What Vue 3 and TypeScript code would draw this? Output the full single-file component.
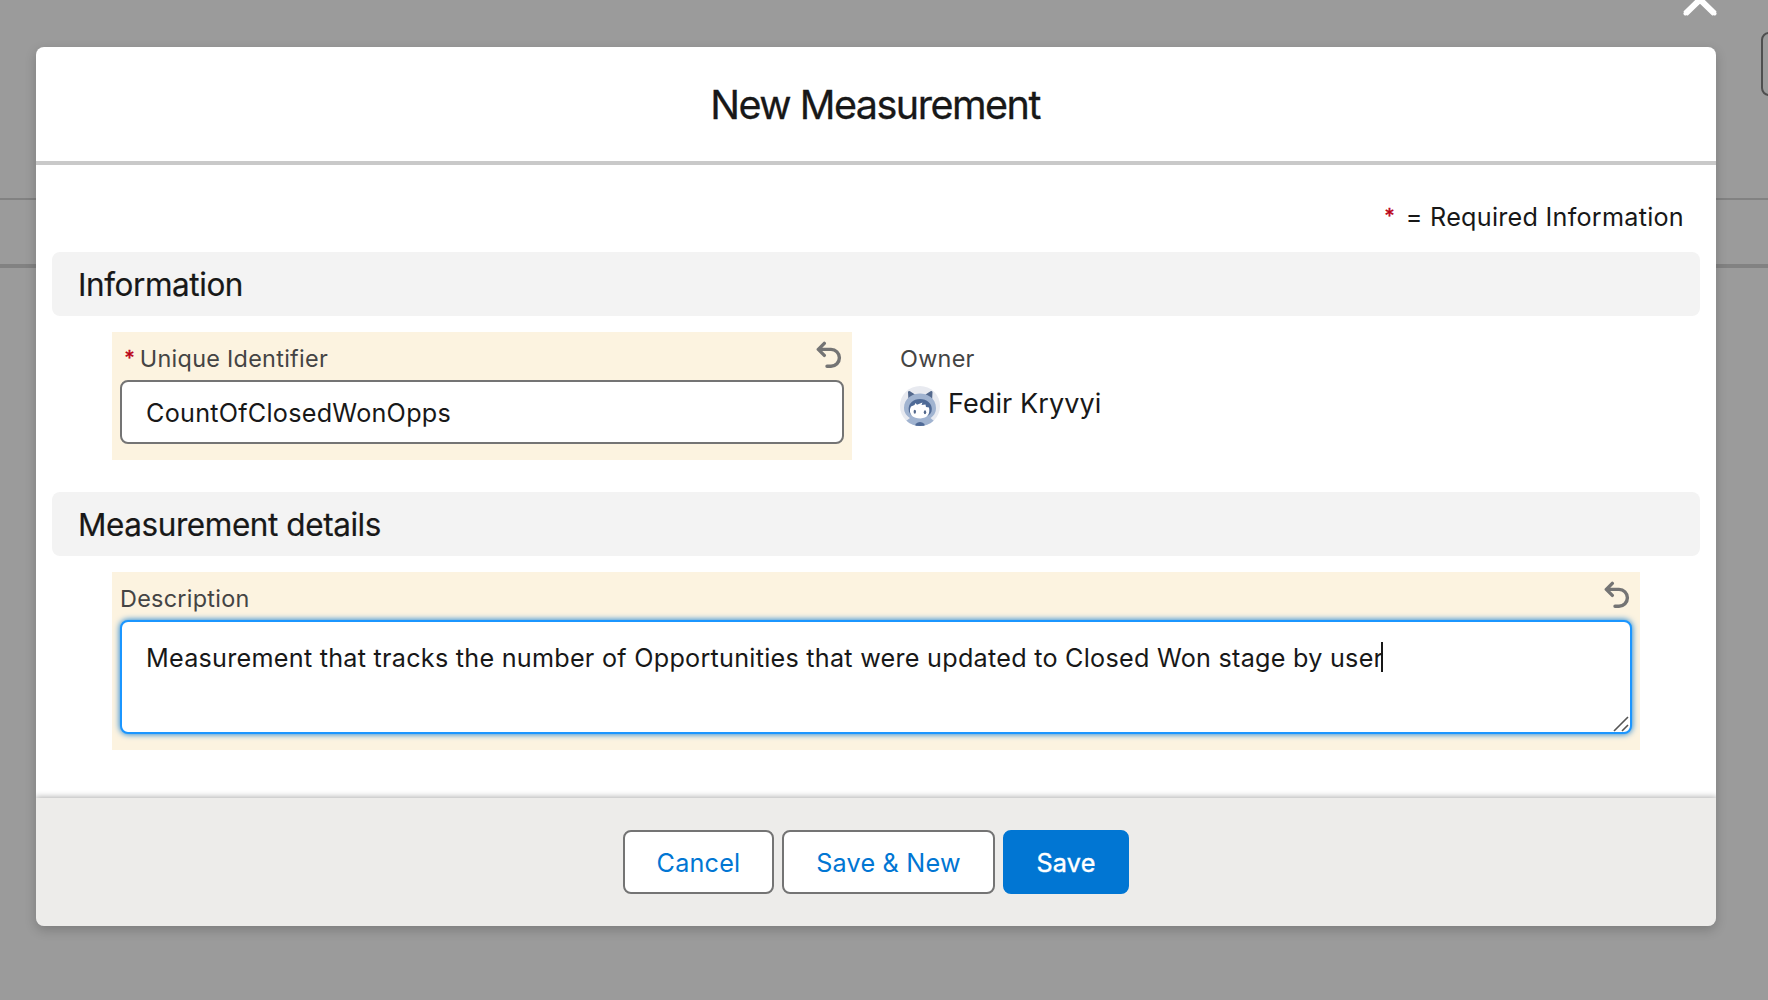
<script setup lang="ts">
import { ref } from 'vue'

const identifier = ref('CountOfClosedWonOpps')
const description = ref('Measurement that tracks the number of Opportunities that were updated to Closed Won stage by user')
const owner = 'Fedir Kryvyi'
</script>

<template>
  <div class="page">
    <div class="rule thin"></div>
    <div class="rule thick"></div>
    <div class="ghost-button"></div>
    <svg class="close" width="40" height="20" viewBox="0 0 40 20">
      <path d="M5.500 13.700 20 -0.500 34.500 13.700" fill="none" stroke="#fff" stroke-width="6" />
      <path d="M5.500 13.500 20 -1 34.500 13.500" fill="none" stroke="#fff" stroke-width="4" stroke-linecap="round" />
    </svg>

    <section class="modal">
      <header class="modal-header"><h1>New Measurement</h1></header>

      <main class="modal-body">
        <p class="required-note"><span class="star">*</span><span class="note">= Required Information</span></p>

        <h2 class="section-title">Information</h2>
        <div class="fields">
          <div class="field edited half">
            <div class="label-row">
              <label class="label"><span class="star">*</span><span>Unique Identifier</span></label>
              <svg class="undo" width="26" height="28" viewBox="0 0 26 28">
                <path d="M8.300 3.400 2.300 9.400 8.300 15.400M3 9.400H15A8.400 8.400 0 0 1 15 26.200H11" fill="none" stroke="#747474" stroke-width="3.400" stroke-linecap="round" stroke-linejoin="round" />
              </svg>
            </div>
            <input v-model="identifier" class="input" type="text" />
          </div>
          <div class="field owner">
            <div class="label">Owner</div>
            <div class="owner-row">
              <svg class="avatar" width="40" height="40" viewBox="0 0 40 40">
                <defs><clipPath id="round"><circle cx="20" cy="20" r="20" /></clipPath></defs>
                <g clip-path="url(#round)">
                  <rect width="40" height="40" fill="#e8eaf0" />
                  <path d="M8 6Q8.500 4.500 10 5.300L15 8.500 8.500 16ZM32.500 6Q32 4.500 30.500 5.300L25.500 8.500 32 16Z" fill="#54698d" />
                  <path d="M20 7.500C27 7.500 36 12 36 22C36 27 33.500 30 30.500 32L35 36 30 42H10L6 35 10 32C7 30 4 27 4 22C4 12 13 7.500 20 7.500Z" fill="#a0b3d0" />
                  <path d="M20 13C27 13 31.800 17.500 31.800 23C31.800 26.500 30 29 27 30H13C10.500 29 8.600 26.500 8.600 23C8.600 17.500 13 13 20 13Z" fill="#4f6a96" />
                  <path d="M11 20.500 14.500 19 15.500 17 17 18.800 22.500 16.500 21.500 19 25.500 18.500 26 21 29 21.500Q31 31.500 20.500 32.500Q9 32 10 23Z" fill="#fff" />
                  <ellipse cx="14.800" cy="25.700" rx="1.200" ry="2" fill="#54698d" />
                  <ellipse cx="25" cy="26.300" rx="1.200" ry="2" fill="#54698d" />
                  <path d="M15.500 38Q20 34 24.500 38V40H15.500Z" fill="#4f6a96" />
                </g>
              </svg>
              <span class="owner-name">{{ owner }}</span>
            </div>
          </div>
        </div>

        <h2 class="section-title second">Measurement details</h2>
        <div class="fields">
          <div class="field edited full">
            <div class="label-row">
              <label class="label">Description</label>
              <svg class="undo" width="26" height="28" viewBox="0 0 26 28">
                <path d="M8.300 3.400 2.300 9.400 8.300 15.400M3 9.400H15A8.400 8.400 0 0 1 15 26.200H11" fill="none" stroke="#747474" stroke-width="3.400" stroke-linecap="round" stroke-linejoin="round" />
              </svg>
            </div>
            <div class="textarea">
              <span>{{ description }}</span><i class="caret"></i>
              <svg class="grip" width="16" height="16" viewBox="0 0 16 16">
                <path d="M1 15 15 1M9 15 15 9" fill="none" stroke="#555" stroke-width="1.600" />
              </svg>
            </div>
          </div>
        </div>
      </main>

      <footer class="modal-footer">
        <button class="btn cancel">Cancel</button>
        <button class="btn save-new">Save &amp; New</button>
        <button class="btn save">Save</button>
      </footer>
    </section>
  </div>
</template>

<style>
body {
  margin: 0;
  overflow: hidden;
}
</style>

<style scoped>
* {
  box-sizing: border-box;
}
.page {
  position: relative;
  width: 1768px;
  height: 1000px;
  padding: 47px 52px 0 36px;
  overflow: hidden;
  background: #9b9b9b;
  font-family: Inter, 'Liberation Sans', sans-serif;
  letter-spacing: 0.25px;
  color: #181818;
}
.rule {
  position: absolute;
  left: 0;
  right: 0;
}
.rule.thin {
  top: 198px;
  height: 2px;
  background: #828282;
}
.rule.thick {
  top: 264px;
  height: 4px;
  background: #828282;
}
.ghost-button {
  position: absolute;
  left: 1761px;
  top: 32px;
  width: 60px;
  height: 64px;
  border: 2px solid #4f4f4f;
  border-radius: 8px;
}
.close {
  position: absolute;
  left: 1680px;
  top: 0;
}
.modal {
  position: relative;
  display: flex;
  flex-direction: column;
  height: 879px;
  border-radius: 8px;
  background: #fff;
  box-shadow: 0 4px 12px rgba(0, 0, 0, 0.2);
}
.modal-header {
  display: flex;
  align-items: center;
  justify-content: center;
  height: 118px;
  border-bottom: 4px solid #c9c9c9;
}
h1,
h2,
p {
  margin: 0;
  font-weight: 400;
}
h1 {
  padding: 1px 2px 0 0;
  font-size: 39.5px;
  line-height: 50px;
  letter-spacing: -1.5px;
  white-space: nowrap;
  -webkit-text-stroke-width: 0.3px;
}
.modal-body {
  flex: 1;
  padding: 32px 16px 0;
}
.required-note {
  display: flex;
  justify-content: flex-end;
  height: 55px;
  padding-right: 16px;
  font-size: 25.2px;
  line-height: 40px;
}
.star {
  color: #ba0517;
  -webkit-text-stroke-width: 0.4px;
}
.required-note .star {
  margin-right: 11px;
  font-size: 20px;
  line-height: 38px;
}
.section-title {
  display: flex;
  align-items: center;
  height: 64px;
  padding: 2px 0 0 26px;
  border-radius: 8px;
  background: #f3f3f3;
  font-size: 31.5px;
  line-height: 40px;
  letter-spacing: -0.43px;
  white-space: nowrap;
  -webkit-text-stroke-width: 0.2px;
}
.second {
  margin-top: 32px;
}
.fields {
  display: flex;
  gap: 48px;
  padding: 16px 60px 0;
}
.field.edited {
  background: #fcf3e0;
  padding: 8px;
}
.half {
  width: 740px;
  height: 128px;
}
.full {
  width: 1528px;
  height: 178px;
}
.label-row {
  display: flex;
  justify-content: space-between;
  height: 40px;
}
.label {
  display: flex;
  font-size: 23.4px;
  line-height: 38px;
  letter-spacing: 0.28px;
  color: #444;
  white-space: nowrap;
}
.label .star {
  margin: 0 5px 0 4.5px;
  font-size: 20px;
  line-height: 36px;
}
.undo {
  margin-right: 2.5px;
}
.input {
  display: block;
  width: 100%;
  height: 64px;
  padding: 2px 24px 0;
  border: 2px solid #747474;
  border-radius: 8px;
  outline: none;
  background: #fff;
  color: #181818;
  font: 400 25.2px/40px Inter, sans-serif;
  letter-spacing: 0.25px;
}
.owner {
  padding-top: 8px;
}
.owner-row {
  display: flex;
  gap: 8px;
  padding-top: 8px;
}
.owner-name {
  padding-top: 1px;
  font-size: 27px;
  line-height: 34px;
  letter-spacing: 0.1px;
  white-space: nowrap;
}
.textarea {
  position: relative;
  display: flex;
  align-items: flex-start;
  height: 114px;
  padding: 17px 24px;
  border: 2px solid #1b96ff;
  border-radius: 8px;
  background: #fff;
  box-shadow: 0 0 6px #0176d3;
  font-size: 25.2px;
  line-height: 38px;
  white-space: nowrap;
}
.caret {
  width: 2px;
  height: 30px;
  margin: 3px 0 0 -2px;
  background: #181818;
}
.grip {
  position: absolute;
  right: 1.5px;
  bottom: 0.5px;
}
.modal-footer {
  display: flex;
  justify-content: center;
  gap: 8px;
  height: 128px;
  padding-top: 32px;
  border-radius: 0 0 8px 8px;
  background: #edecea;
  box-shadow: 0 0 6px 1px rgba(0, 0, 0, 0.32);
  clip-path: inset(-10px 0 0 0 round 0 0 8px 8px);
}
.btn {
  height: 64px;
  padding: 2px 0 0;
  border: 2px solid #747474;
  border-radius: 8px;
  background: #fff;
  color: #0176d3;
  font: 400 25.2px/40px Inter, sans-serif;
  letter-spacing: 0.2px;
  white-space: nowrap;
}
.cancel {
  width: 151px;
}
.save-new {
  width: 213px;
}
.save {
  width: 126px;
  border-color: #0176d3;
  background: #0176d3;
  color: #fff;
  -webkit-text-stroke-width: 0.4px;
}
</style>
